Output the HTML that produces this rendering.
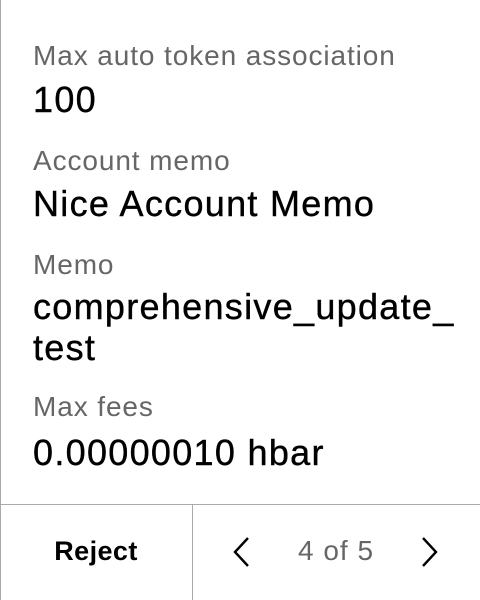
<!DOCTYPE html>
<html><head><style>
body{margin:0;width:480px;height:600px;background:#fff;position:relative;overflow:hidden;font-family:"Liberation Sans",sans-serif}
.t{position:absolute;left:33px;white-space:nowrap;line-height:1}
.l{font-size:28px;color:#666;letter-spacing:0.9px}
.v{font-size:36px;color:#000;letter-spacing:1.3px;-webkit-text-stroke:0.4px #000}
</style></head><body>
<div style="position:absolute;left:0;top:0;width:1px;height:600px;background:#aaa"></div>
<div class="t l" style="top:42px">Max auto token association</div>
<div class="t v" style="top:82px">100</div>
<div class="t l" style="top:147px">Account memo</div>
<div class="t v" style="top:186px">Nice Account Memo</div>
<div class="t l" style="top:251px">Memo</div>
<div class="t v" style="top:289px">comprehensive_update_</div>
<div class="t v" style="top:330px">test</div>
<div class="t l" style="top:393px">Max fees</div>
<div class="t v" style="top:435px">0.00000010 hbar</div>
<div style="position:absolute;left:0;top:504px;width:480px;height:1px;background:#aaa"></div>
<div style="position:absolute;left:192px;top:504px;width:1px;height:96px;background:#aaa"></div>
<div style="position:absolute;left:0;top:536px;width:192px;text-align:center;font-size:27px;font-weight:bold;line-height:30px;letter-spacing:0.4px">Reject</div>
<svg style="position:absolute;left:230px;top:535px" width="24" height="34"><path d="M18 3 L5 17 L18 31" fill="none" stroke="#000" stroke-width="2.4"/></svg>
<div style="position:absolute;left:290px;top:536px;width:92px;text-align:center;font-size:28px;color:#666;line-height:30px;letter-spacing:1px">4 of 5</div>
<svg style="position:absolute;left:418px;top:535px" width="24" height="34"><path d="M5 3 L18 17 L5 31" fill="none" stroke="#000" stroke-width="2.4"/></svg>
</body></html>
